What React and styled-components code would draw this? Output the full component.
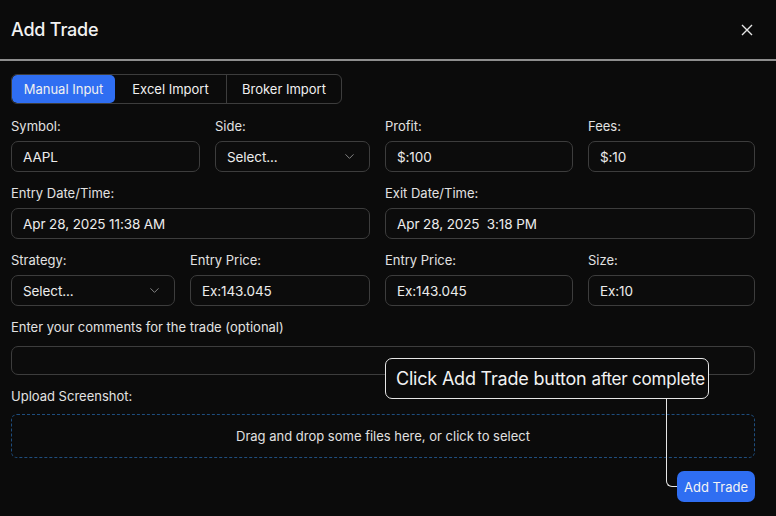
import React from "react";
import styled, { createGlobalStyle } from "styled-components";
import { ChevronDown } from "lucide-react";

const Global = createGlobalStyle`
  html, body { margin: 0; padding: 0; background: #0b0b0b; }
  * { box-sizing: border-box; }
  body { font-family: Inter, "Liberation Sans", sans-serif; color: #e8e8e8; }
`;

const Modal = styled.div`
  width: 776px;
  height: 516px;
  background: #0b0b0b;
  position: relative;
  overflow: hidden;
`;

const Header = styled.div`
  height: 59px;
  display: flex;
  align-items: center;
  justify-content: space-between;
  padding: 0 23px 0 11px;
  border-bottom: 2px solid #8e8e8e;
  box-sizing: content-box;
`;

const Title = styled.h1`
  margin: 0;
  font-size: 18px;
  font-weight: 500;
  color: #f2f2f2;
  letter-spacing: -0.2px;
`;

const CloseBtn = styled.button`
  background: none;
  border: 0;
  padding: 0;
  display: flex;
  cursor: pointer;
`;

const Body = styled.div`
  padding: 13px 21px 0 11px;
  display: flex;
  flex-direction: column;
`;

const Tabs = styled.div`
  display: flex;
  width: 331px;
  height: 30px;
  border: 1px solid #3d3d3d;
  border-radius: 6px;
  overflow: hidden;
  margin-bottom: 14px;
`;

const Tab = styled.div`
  flex: 0 0 ${(p) => p.w}px;
  display: flex;
  align-items: center;
  justify-content: center;
  font-size: 13px;
  color: #f0f0f0;
  background: ${(p) => (p.active ? "#2f6ef2" : "transparent")};
  border-radius: ${(p) => (p.active ? "5px" : "0")};
  border-left: ${(p) => (p.divider ? "1px solid #3d3d3d" : "none")};
`;

const Row = styled.div`
  display: grid;
  grid-template-columns: ${(p) => p.cols};
  column-gap: 15px;
  margin-bottom: 13px;
`;

const Field = styled.div`
  display: flex;
  flex-direction: column;
`;

const Label = styled.label`
  font-size: 13px;
  line-height: 16px;
  color: #e2e2e2;
  margin-bottom: ${(p) => p.mb || 7}px;
`;

const Input = styled.div`
  height: ${(p) => p.h || 31}px;
  border: 1px solid #3d3d3d;
  border-radius: 7px;
  background: #0c0c0c;
  display: flex;
  align-items: center;
  justify-content: space-between;
  padding: 0 12px 0 11px;
  font-size: 13.5px;
  color: #ececec;
  letter-spacing: -0.1px;
`;

const Drop = styled.div`
  height: 44px;
  border: 1px dashed #1f4d7d;
  border-radius: 6px;
  display: flex;
  align-items: center;
  justify-content: center;
  font-size: 13px;
  color: #e0e0e0;
`;

const Footer = styled.div`
  display: flex;
  justify-content: flex-end;
  margin-top: 13px;
`;

const Primary = styled.button`
  width: 78px;
  height: 31px;
  border: 0;
  border-radius: 7px;
  background: #2f6ef2;
  color: #f4f4f4;
  font-family: inherit;
  font-size: 13px;
  white-space: nowrap;
  padding: 0;
`;

const Tooltip = styled.div`
  position: absolute;
  left: 385px;
  top: 358px;
  width: 324px;
  height: 41px;
  border: 1.5px solid #e6e6e6;
  border-radius: 7px;
  background: #0b0b0b;
  display: flex;
  align-items: center;
  padding-left: 10px;
  font-size: 18px;
  color: #f2f2f2;
  white-space: nowrap;
  letter-spacing: -0.2px;
`;

const Small = styled.span`
  font-size: 17px;
  margin-left: 5px;
`;

const Connector = styled.div`
  position: absolute;
  left: 666px;
  top: 399px;
  width: 11px;
  height: 88px;
  border-left: 1.5px solid #e6e6e6;
  border-bottom: 1.5px solid #e6e6e6;
  border-bottom-left-radius: 6px;
`;

const Chevron = () => <ChevronDown size={15} color="#8a8a8a" strokeWidth={1.5} />;

export default function App() {
  return (
    <>
      <Global />
      <Modal>
        <Header>
          <Title>Add Trade</Title>
          <CloseBtn>
            <svg width="12" height="12" viewBox="0 0 12 12">
              <path d="M1 1 L11 11 M11 1 L1 11" stroke="#e6e6e6" strokeWidth="1.4" />
            </svg>
          </CloseBtn>
        </Header>
        <Body>
          <Tabs>
            <Tab w={103} active>Manual Input</Tab>
            <Tab w={111}>Excel Import</Tab>
            <Tab w={115} divider>Broker Import</Tab>
          </Tabs>

          <Row cols="189px 155px 188px 1fr">
            <Field>
              <Label>Symbol:</Label>
              <Input>AAPL</Input>
            </Field>
            <Field>
              <Label>Side:</Label>
              <Input>Select...<Chevron /></Input>
            </Field>
            <Field>
              <Label>Profit:</Label>
              <Input>$:100</Input>
            </Field>
            <Field>
              <Label>Fees:</Label>
              <Input>$:10</Input>
            </Field>
          </Row>

          <Row cols="359px 1fr">
            <Field>
              <Label>Entry Date/Time:</Label>
              <Input>Apr 28, 2025 11:38 AM</Input>
            </Field>
            <Field>
              <Label>Exit Date/Time:</Label>
              <Input>Apr 28, 2025&nbsp; 3:18 PM</Input>
            </Field>
          </Row>

          <Row cols="164px 180px 188px 1fr">
            <Field>
              <Label>Strategy:</Label>
              <Input>Select...<Chevron /></Input>
            </Field>
            <Field>
              <Label>Entry Price:</Label>
              <Input>Ex:143.045</Input>
            </Field>
            <Field>
              <Label>Entry Price:</Label>
              <Input>Ex:143.045</Input>
            </Field>
            <Field>
              <Label>Size:</Label>
              <Input>Ex:10</Input>
            </Field>
          </Row>

          <Row cols="1fr">
            <Field>
              <Label mb={11}>Enter your comments for the trade (optional)</Label>
              <Input h={29} />
            </Field>
          </Row>

          <Field>
            <Label mb={10}>Upload Screenshot:</Label>
            <Drop>Drag and drop some files here, or click to select</Drop>
          </Field>

          <Footer>
            <Primary>Add Trade</Primary>
          </Footer>
        </Body>
        <Connector />
        <Tooltip>
          Click Add Trade button<Small>after complete</Small>
        </Tooltip>
      </Modal>
    </>
  );
}
